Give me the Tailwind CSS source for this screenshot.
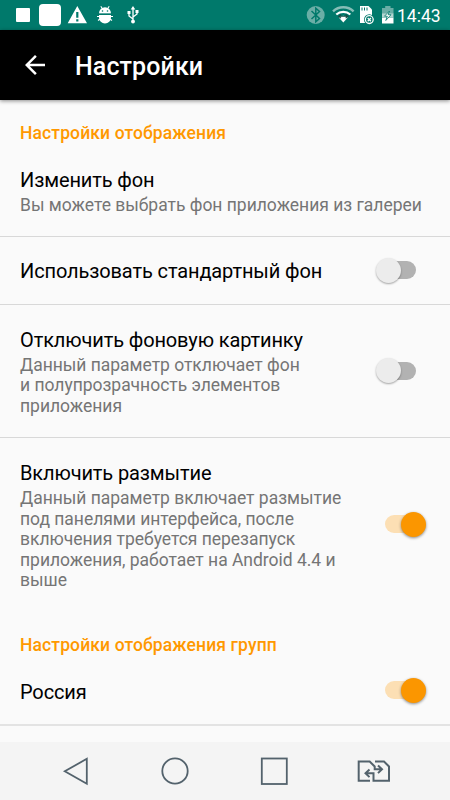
<!DOCTYPE html>
<html lang="ru">
<head>
<meta charset="utf-8">
<title>Настройки</title>
<script src="https://cdn.jsdelivr.net/npm/@tailwindcss/browser@4"></script>
</head>
<body class="w-[450px] h-[800px] overflow-hidden bg-[#fafafa] font-[Roboto,sans-serif] flex flex-col">
<header class="h-[30px] shrink-0 bg-[#00796b] flex items-center justify-between text-white">
  <svg width="150" height="30" viewBox="0 0 150 30" fill="#fff">
    <rect x="16" y="8" width="14" height="14" rx="1"/>
    <rect x="39" y="4" width="22" height="22" rx="4"/>
    <path fill-rule="evenodd" d="M77.300 6L87 23.300H67.700zM76.200 12v5.800h2.200V12zM76.200 19.300v2.200h2.200v-2.200z"/>
    <path d="M99 13.500a6 6.200 0 0 1 12 0zM99 15h12v2.500a6 6 0 0 1-12 0z"/>
    <path d="M100.800 6.300l2 3M109.200 6.300l-2 3M97 16.500h16M98 20.500l2-1.500M112 20.500l-2-1.500" stroke="#fff" stroke-width="1.100" fill="none"/>
    <path d="M98.500 14.200h13" stroke="#00796b" stroke-width="1"/>
    <circle cx="102.500" cy="11" r=".8" fill="#00796b"/><circle cx="107.500" cy="11" r=".8" fill="#00796b"/>
    <path d="M133 9v12M133 19l-4-3v-3M133 17l4-3v-3" stroke="#fff" stroke-width="1.300" fill="none"/>
    <path d="M133 6l2.300 3.500h-4.600zM127.500 11h3v3h-3zM135.500 10h3v3h-3z"/><circle cx="133" cy="21.500" r="1.900"/>
  </svg>
  <div class="flex items-center">
    <svg width="98" height="30" viewBox="300 0 98 30">
      <circle cx="315.700" cy="15" r="9" fill="#6aaea6"/>
      <path d="M311.500 11l8 7.500-3.700 3.300V8.200l3.700 3.300-8 7.500" fill="none" stroke="#00796b" stroke-width="1.500"/>
      <path d="M333 11.300a15 15 0 0 1 20.600 0" fill="none" stroke="#85bdb6" stroke-width="2.400"/>
      <path d="M336.300 14.500a10.500 10.500 0 0 1 14 0" fill="none" stroke="#fff" stroke-width="2.200"/>
      <path d="M343.300 22.500l-4.500-5a7 7 0 0 1 9 0z" fill="#fff"/>
      <path d="M338.500 16.200h9.600M341 14.500l-2.300 1.900 2.300 1.700M345.600 14.500l2.300 1.900-2.300 1.700" fill="none" stroke="#174d46" stroke-width="1.100"/>
      <path d="M360 6h8.500l3.500 3.500V23h-12z" fill="#fff"/>
      <path d="M362 7.500v3M364.500 7.500v3M367 7.500v3" stroke="#00796b" stroke-width="1"/>
      <circle cx="369.300" cy="19.600" r="5.300" fill="#00796b"/><circle cx="369.300" cy="19.600" r="3.900" fill="none" stroke="#fff" stroke-width="1.300"/>
      <path d="M367.700 18l3.200 3.200M370.900 18l-3.200 3.200" stroke="#fff" stroke-width="1.300"/>
      <path d="M382 8h3.200V6h5.300v2h3v6H382z" fill="#6aaea6"/><path d="M382 17.500h11.500v6H382z" fill="#fff"/><path d="M382 13.500h11.500v4H382z" fill="#b5d6d2"/>
      <path d="M389.500 11l-5 5.200h2.800l-1.500 4.300 5.200-5.800h-2.900z" fill="#fff" stroke="#00796b" stroke-width=".8"/>
    </svg>
    <span class="w-[53px] text-[17.5px] leading-[30px] pt-[2px] -ml-px">14:43</span>
  </div>
</header>
<div class="relative z-10 h-[70px] shrink-0 bg-black shadow-[0_1px_4px_rgba(0,0,0,0.45)] flex items-center pl-[20px] text-white">
  <svg class="w-[30px] h-[30px]" viewBox="0 0 24 24" fill="#fff"><path d="M20 11H7.830l5.590-5.590L12 4l-8 8 8 8 1.410-1.410L7.830 13H20z"/></svg>
  <h1 class="ml-[25px] pt-[3px] text-[25px] leading-[30px] font-medium tracking-[0.1px]">Настройки</h1>
</div>
<main class="h-[642px] shrink-0 overflow-hidden text-[20px] leading-[24px] tracking-[-0.12px] text-black">
  <h2 class="h-[68px] pt-[23px] px-5 text-[17.5px] leading-[21px] tracking-[0.12px] font-medium text-[#ff9800]">Настройки отображения</h2>
  <section class="h-[69px] px-5 border-b border-[#d8d8d8]">
    <h3>Изменить фон</h3>
    <p class="mt-[3px] text-[17.5px] leading-[20.600px] tracking-[-0.015px] text-[#757575] whitespace-nowrap">Вы можете выбрать фон приложения из галереи</p>
  </section>
  <section class="h-[68px] pl-5 pr-[24px] border-b border-[#d8d8d8] flex items-center justify-between">
    <h3>Использовать стандартный фон</h3>
    <div class="w-[50px] h-[26px] mb-px flex items-center"><div class="ml-[8px] w-[32px] h-[18px] rounded-full bg-[#b2b2b2] flex items-center"><div class="-ml-[8px] w-[25px] h-[25px] shrink-0 rounded-full bg-[#ececec] shadow-[0_1px_2px_rgba(0,0,0,0.35)]"></div></div></div>
  </section>
  <section class="h-[133px] pl-5 pr-[24px] border-b border-[#d8d8d8] flex items-center justify-between">
    <div class="pt-[2px]"><h3>Отключить фоновую картинку</h3>
    <p class="mt-[3px] text-[17.5px] leading-[20.600px] tracking-[-0.025px] text-[#757575]">Данный параметр отключает фон<br>и полупрозрачность элементов<br>приложения</p></div>
    <div class="w-[50px] h-[26px] mb-px flex items-center"><div class="ml-[8px] w-[32px] h-[18px] rounded-full bg-[#b2b2b2] flex items-center"><div class="-ml-[8px] w-[25px] h-[25px] shrink-0 rounded-full bg-[#ececec] shadow-[0_1px_2px_rgba(0,0,0,0.35)]"></div></div></div>
  </section>
  <section class="h-[174px] pl-5 pr-[25px] flex items-center justify-between">
    <div class="pt-[2px]"><h3>Включить размытие</h3>
    <p class="mt-[3px] text-[17.5px] leading-[20.600px] tracking-[-0.025px] text-[#757575]">Данный параметр включает размытие<br>под панелями интерфейса, после<br>включения требуется перезапуск<br>приложения, работает на Android 4.4 и<br>выше</p></div>
    <div class="w-[40px] h-[26px] mb-[2px] flex items-center"><div class="w-[32px] h-[18px] rounded-full bg-[#fcdfb4] flex items-center justify-end"><div class="-mr-[9px] w-[25px] h-[25px] shrink-0 rounded-full bg-[#fb9600] shadow-[0_1px_3px_rgba(0,0,0,0.45)]"></div></div></div>
  </section>
  <h2 class="h-[46px] pt-[23px] px-5 text-[17.5px] leading-[21px] tracking-[0.12px] font-medium text-[#ff9800]">Настройки отображения групп</h2>
  <section class="h-[68px] pl-5 pr-[25px] border-b-2 border-[#e3e3e3] flex items-center justify-between">
    <h3 class="pt-[2px]">Россия</h3>
    <div class="w-[40px] h-[26px] mb-[2px] flex items-center"><div class="w-[32px] h-[18px] rounded-full bg-[#fcdfb4] flex items-center justify-end"><div class="-mr-[9px] w-[25px] h-[25px] shrink-0 rounded-full bg-[#fb9600] shadow-[0_1px_3px_rgba(0,0,0,0.45)]"></div></div></div>
  </section>
</main>
<nav class="h-[58px] shrink-0 bg-[#f4f4f4]">
  <svg width="450" height="58" viewBox="0 742 450 58" fill="none" stroke="#53626c" stroke-width="1.800">
    <path d="M86.800 758.800v25L64.800 771.300z"/>
    <circle cx="175" cy="771" r="12.700"/>
    <rect x="261.800" y="758.500" width="25" height="25.500"/>
    <path d="M370 780.700h-11.300v-19.200h11l5 5v2.800h7M378 765.500l4 3.800-4 3.800M375 761.500h9l5 5v14.200h-15.500v-7.400h-8M369.500 769.500l-4 3.800 4 3.800" stroke-width="2"/>
  </svg>
</nav>
</body>
</html>
